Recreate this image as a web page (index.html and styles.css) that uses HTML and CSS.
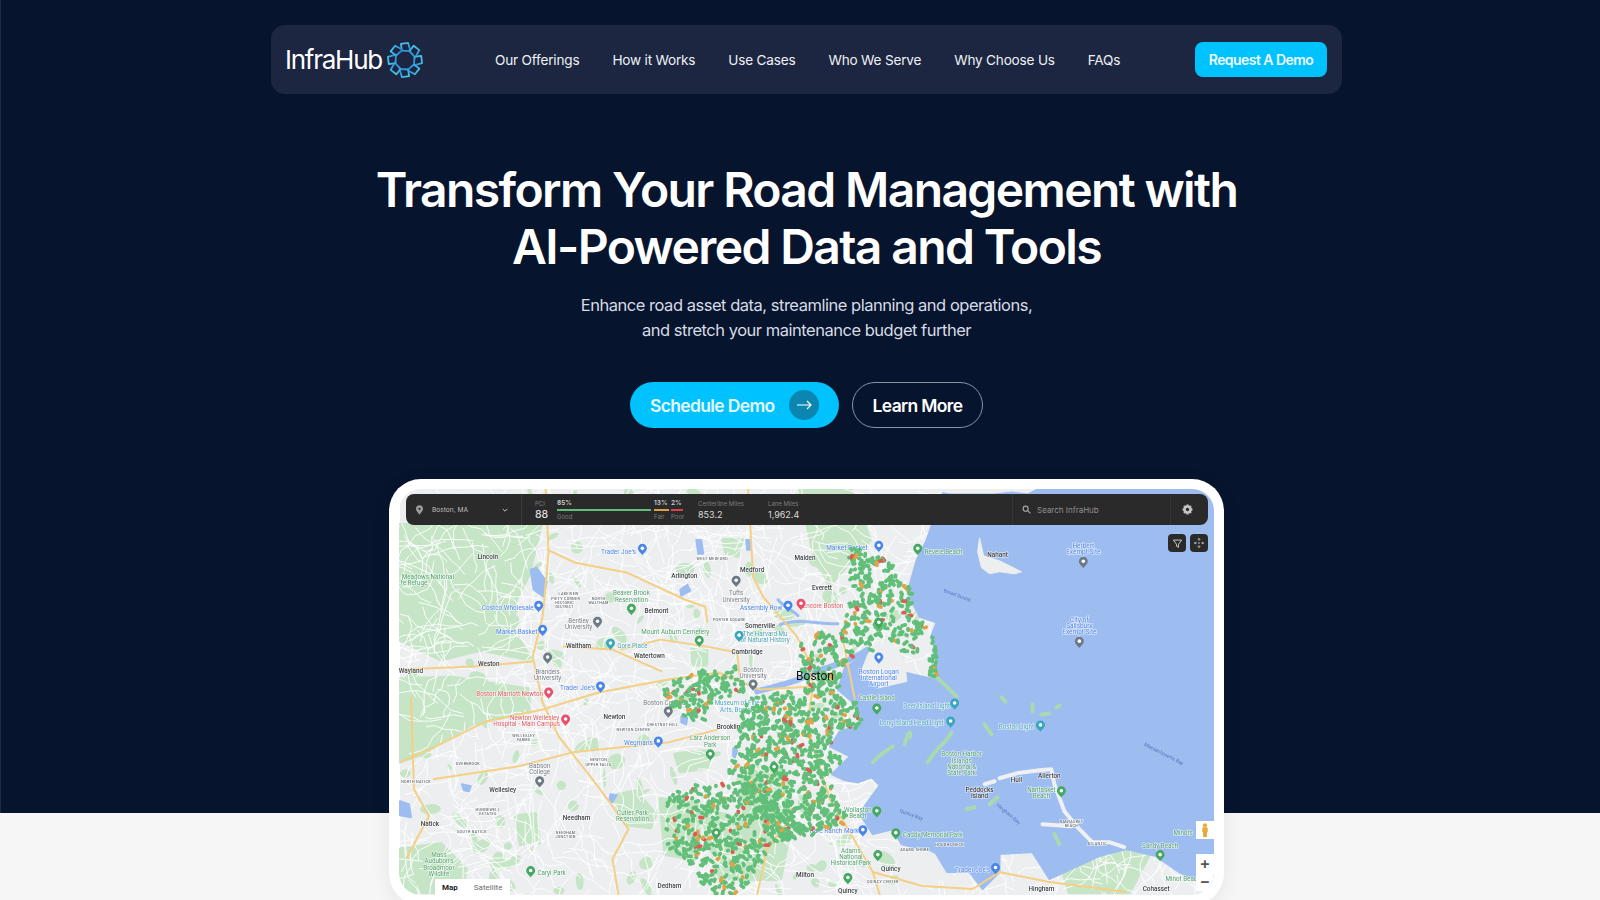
FILE: index.html
```html
<!DOCTYPE html>
<html lang="en">
<head>
    <meta charset="UTF-8">
    <meta name="viewport" content="width=device-width, initial-scale=1.0">
    <title>InfraHub - AI-Powered Road Management</title>
    <link rel="stylesheet" href="styles.css">
</head>
<body>
    <section class="hero">
        <header class="navbar">
            <a class="logo" href="#">
                <span class="logo-text">InfraHub</span>
                <svg class="logo-mark" viewBox="-20 -20 40 40" aria-hidden="true">
                    <defs>
                        <linearGradient id="logoGrad" x1="0" y1="0" x2="1" y2="1">
                            <stop offset="0" stop-color="#4cc9e6"/>
                            <stop offset="1" stop-color="#2586d6"/>
                        </linearGradient>
                        <path id="tooth" d="M-4.5 -18 L3.5 -19 L6 -10 L-3.5 -10.5 Z"/>
                    </defs>
                    <g fill="none" stroke="url(#logoGrad)" stroke-width="2" stroke-linejoin="round">
                        <use href="#tooth"/>
                        <use href="#tooth" transform="rotate(45)"/>
                        <use href="#tooth" transform="rotate(90)"/>
                        <use href="#tooth" transform="rotate(135)"/>
                        <use href="#tooth" transform="rotate(180)"/>
                        <use href="#tooth" transform="rotate(225)"/>
                        <use href="#tooth" transform="rotate(270)"/>
                        <use href="#tooth" transform="rotate(315)"/>
                    </g>
                </svg>
            </a>
            <nav class="nav-links">
                <a href="#">Our Offerings</a>
                <a href="#">How it Works</a>
                <a href="#">Use Cases</a>
                <a href="#">Who We Serve</a>
                <a href="#">Why Choose Us</a>
                <a href="#">FAQs</a>
            </nav>
            <a class="nav-cta" href="#">Request A Demo</a>
        </header>

        <h1 class="hero-title">Transform Your Road Management with<br>AI-Powered Data and Tools</h1>
        <p class="hero-sub">Enhance road asset data, streamline planning and operations,<br>and stretch your maintenance budget further</p>

        <div class="hero-actions">
            <a class="btn btn-primary" href="#">
                Schedule Demo
                <span class="btn-arrow">
                    <svg viewBox="0 0 20 20" width="20" height="20" aria-hidden="true"><path d="M3 10h14M13 6l4 4-4 4" fill="none" stroke="#fff" stroke-width="1.2"/></svg>
                </span>
            </a>
            <a class="btn btn-ghost" href="#">Learn More</a>
        </div>

        <div class="preview-card">
            <div class="map">
                <svg class="map-canvas" id="mapCanvas" viewBox="399 489 815 407" aria-label="Map of Boston road conditions">
                    <defs>
                        <g id="pin">
                            <path d="M0 5.5C-1.5 3-4.5 1.5-4.5-1.5a4.5 4.5 0 0 1 9 0C4.5 1.5 1.5 3 0 5.5Z"/>
                            <circle cx="0" cy="-1.5" r="1.8" fill="#fff"/>
                        </g>
                    </defs>

                    <rect x="399" y="489" width="815" height="407" fill="#eceef0"/>

                    <g class="green">
                        <polygon points="399,525 540,525 528,575 515,600 508,622 530,660 480,650 440,660 399,640"/>
                        <polygon points="399,680 450,678 528,690 528,712 470,725 420,755 399,762"/>
                        <polygon points="612,797 635,792 655,815 650,828 625,825"/>
                        <polygon points="515,817 535,815 538,840 520,845"/>
                        <polygon points="400,850 440,845 465,870 460,893 400,893"/>
                        <polygon points="723,540 742,540 738,556 726,553"/>
                        <polygon points="692,650 706,650 706,665 692,665"/>
                        <polygon points="675,755 705,752 708,768 680,772"/>
                        <polygon points="745,768 782,770 790,810 760,830 740,805"/>
                        <polygon points="700,810 790,830 780,880 720,880"/>
                        <polygon points="660,800 700,805 695,860 665,855"/>
                        <polygon points="800,489 850,489 870,540 830,585 815,560"/>
                        <polygon points="1060,860 1110,850 1150,855 1130,893 1070,893"/>
                    </g>
                    <g id="parks" class="parks"></g>

                    <g id="minorRoads" class="minor-roads"></g>

                    <g class="lakes">
                        <polygon points="530,570 536,568 546,582 543,597 533,590"/>
                        <polygon points="680,590 687,585 690,591 681,596"/>
                        <polygon points="696,540 701,540 703,554 698,554"/>
                        <polygon points="746,540 749,540 751,550 747,550"/>
                        <polygon points="681,717 687,718 686,725 681,723"/>
                        <polygon points="733,749 737,751 735,758 733,757"/>
                        <polygon points="461,785 470,787 468,792 463,791"/>
                        <polygon points="399,802 408,805 410,818 399,816"/>
                        <polygon points="610,795 616,796 612,803 609,800"/>
                    </g>
                    <path class="river" d="M757 692C775 686 795 684 812 674 825 667 840 668 868 650"/>
                    <path class="river thin" d="M780 625C800 618 820 625 838 624"/>
                    <path class="river thin" d="M778 600C784 608 792 610 798 616"/>

                    <polygon class="water" points="945,489 927,540 917,560 910,585 911,600 920,617 937,623 930,640 937,663 935,680 900,672 870,652 845,668 838,690 852,702 860,713 862,725 840,732 830,747 850,757 832,775 845,781 858,783 872,778 880,786 866,805 860,815 873,835 893,830 903,847 933,852 947,873 970,873 983,890 1000,873 1000,855 1033,853 1050,880 1100,857 1127,850 1157,857 1180,873 1214,890 1214,489"/>

                    <g class="land">
                        <polygon points="874,645 890,642 905,660 907,682 880,688 860,675 868,655"/>
                        <polygon points="900,630 925,625 934,650 915,660 900,650"/>
                        <polygon points="980,538 984,556 1000,561 1022,572 1015,574 1000,572 990,574 982,568 978,552"/>
                        <polygon points="930,489 1036,489 1028,493 1012,491 995,493 950,493"/>
                        <polygon points="895,845 935,855 950,880 900,885"/>
                    </g>
                    <g class="spit">
                        <path d="M1000 779L1017 774 1040 771 1052 770 1055 785 1065 812 1080 830 1093 843 1110 843 1125 848"/>
                        <path d="M1043 825L1072 827"/>
                        <path d="M985 785L995 782"/>
                    </g>

                    <g class="island">
                        <path d="M928 763C935 750 945 745 952 733"/>
                        <path d="M873 763C880 755 885 752 893 747"/>
                        <path d="M910 738C912 730 908 732 905 745"/>
                        <path d="M930 672C940 680 950 690 957 697"/>
                        <path d="M985 725L992 735"/>
                        <path d="M1002 698L1006 702"/>
                        <path d="M967 810L975 808M990 805L998 798"/>
                        <path d="M1055 835L1060 845"/>
                        <path d="M1033 705V712M1042 715L1050 714M1057 708L1060 706"/>
                    </g>

                    <g class="highways">
                        <path d="M545 489L548 553 542 617 532 657 542 703 558 737 592 780 612 807 628 830 612 860 618 896"/>
                        <path d="M547 550L575 563 627 573 685 600 705 607 707 623"/>
                        <path d="M399 763L435 747 485 722 542 710 598 693 668 680 718 673 760 690 813 687"/>
                        <path d="M432 780L518 767 572 753 668 743 718 730"/>
                        <path d="M399 670L472 667 532 662M562 647L612 650 662 672"/>
                        <path d="M410 697L413 790 428 817 405 860"/>
                        <path d="M748 489L753 577 763 597 797 637 810 663 813 687 807 727 830 800 850 833 873 873 880 896"/>
                        <path d="M873 873L923 887 973 890 1000 873 1050 883 1127 893"/>
                        <path d="M757 896L767 850 790 820"/>
                        <path d="M707 647L737 653 740 680"/>
                        <path d="M620 650L660 640 707 647"/>
                        <path d="M843 640L855 700"/>
                    </g>

                    <g class="lbl">
                        <text x="487" y="559">Lincoln</text>
                        <text x="578" y="648">Waltham</text>
                        <text x="656" y="613">Belmont</text>
                        <text x="649" y="658">Watertown</text>
                        <text x="488" y="666">Weston</text>
                        <text x="410" y="673">Wayland</text>
                        <text x="614" y="720">Newton</text>
                        <text x="730" y="730">Brookline</text>
                        <text x="502" y="793">Wellesley</text>
                        <text x="576" y="821">Needham</text>
                        <text x="429" y="827">Natick</text>
                        <text x="669" y="889">Dedham</text>
                        <text x="805" y="560">Malden</text>
                        <text x="752" y="572">Medford</text>
                        <text x="684" y="578">Arlington</text>
                        <text x="822" y="590">Everett</text>
                        <text x="760" y="628">Somerville</text>
                        <text x="747" y="654">Cambridge</text>
                        <text x="998" y="557">Nahant</text>
                        <text x="805" y="878">Milton</text>
                        <text x="891" y="872">Quincy</text>
                        <text x="848" y="894">Quincy</text>
                        <text x="1017" y="783">Hull</text>
                        <text x="1050" y="779">Allerton</text>
                        <text x="1042" y="892">Hingham</text>
                        <text x="1157" y="892">Cohasset</text>
                        <text x="980" y="793">Peddocks</text>
                        <text x="980" y="799">Island</text>
                    </g>
                    <g class="lbl-grey">
                        <text x="547" y="674">Brandeis</text>
                        <text x="547" y="680">University</text>
                        <text x="578" y="623">Bentley</text>
                        <text x="578" y="629">University</text>
                        <text x="539" y="769">Babson</text>
                        <text x="539" y="775">College</text>
                        <text x="664" y="706">Boston College</text>
                        <text x="736" y="595">Tufts</text>
                        <text x="736" y="602">University</text>
                        <text x="753" y="672">Boston</text>
                        <text x="753" y="678">University</text>
                    </g>
                    <g class="lbl-caps">
                        <text x="568" y="595">LAKEVIEW</text>
                        <text x="565" y="600">PIETY CORNER</text>
                        <text x="564" y="604">HISTORIC</text>
                        <text x="564" y="608">DISTRICT</text>
                        <text x="598" y="600">NORTH</text>
                        <text x="598" y="604">WALTHAM</text>
                        <text x="712" y="560">WEST MEDFORD</text>
                        <text x="729" y="621">PORTER SQUARE</text>
                        <text x="662" y="727">CHESTNUT HILL</text>
                        <text x="633" y="732">NEWTON CENTRE</text>
                        <text x="523" y="738">WELLESLEY</text>
                        <text x="523" y="742">FARMS</text>
                        <text x="598" y="762">NEWTON</text>
                        <text x="598" y="767">UPPER FALLS</text>
                        <text x="467" y="766">OVERBROOK</text>
                        <text x="415" y="784">NORTH NATICK</text>
                        <text x="487" y="812">HUNNEWELL</text>
                        <text x="487" y="816">ESTATES</text>
                        <text x="471" y="834">SOUTH NATICK</text>
                        <text x="565" y="835">NEEDHAM</text>
                        <text x="565" y="839">JUNCTION</text>
                        <text x="950" y="847">HOUGHS NECK</text>
                        <text x="915" y="852">ADAMS SHORE</text>
                        <text x="883" y="884">QUINCY CENTER</text>
                        <text x="1072" y="824">NANTASKET</text>
                        <text x="1072" y="828">BEACH</text>
                        <text x="1098" y="846">ATLANTIC</text>
                    </g>
                    <g class="lbl-green">
                        <text x="427" y="579">Meadows National</text>
                        <text x="413" y="585">fe Refuge</text>
                        <text x="631" y="595">Beaver Brook</text>
                        <text x="631" y="602">Reservation</text>
                        <text x="675" y="634">Mount Auburn Cemetery</text>
                        <text x="710" y="741">Larz Anderson</text>
                        <text x="710" y="748">Park</text>
                        <text x="632" y="816">Cutler Park</text>
                        <text x="632" y="822">Reservation</text>
                        <text x="438" y="858">Mass</text>
                        <text x="438" y="864">Audubon's</text>
                        <text x="438" y="871">Broadmoor</text>
                        <text x="438" y="877">Wildlife</text>
                        <text x="551" y="876">Caryl Park</text>
                        <text x="944" y="554">Revere Beach</text>
                        <text x="877" y="701">Castle Island</text>
                        <text x="858" y="813">Wollaston</text>
                        <text x="858" y="819">Beach</text>
                        <text x="933" y="838">Caddy Memorial Park</text>
                        <text x="851" y="854">Adams</text>
                        <text x="851" y="860">National</text>
                        <text x="851" y="866">Historical Park</text>
                        <text x="962" y="757">Boston Harbor</text>
                        <text x="962" y="764">Islands</text>
                        <text x="962" y="770">National &amp;</text>
                        <text x="962" y="776">State Park</text>
                        <text x="1042" y="793">Nantasket</text>
                        <text x="1042" y="799">Beach</text>
                        <text x="1161" y="849">Sandy Beach</text>
                        <text x="1184" y="882">Minot Beach</text>
                        <text x="1184" y="836">Minots</text>
                    </g>
                    <g class="lbl-blue">
                        <text x="618" y="554">Trader Joe's</text>
                        <text x="507" y="610">Costco Wholesale</text>
                        <text x="516" y="634">Market Basket</text>
                        <text x="577" y="691">Trader Joe's</text>
                        <text x="638" y="746">Wegmans</text>
                        <text x="761" y="610">Assembly Row</text>
                        <text x="847" y="550">Market Basket</text>
                        <text x="837" y="834">Rare Ranch Market</text>
                        <text x="973" y="873">Trader Joe's</text>
                        <text x="879" y="674">Boston Logan</text>
                        <text x="879" y="680">International</text>
                        <text x="879" y="686">Airport</text>
                        <text x="1084" y="548">Herbert</text>
                        <text x="1084" y="554">Exempt Site</text>
                        <text x="1080" y="622">City of</text>
                        <text x="1080" y="628">Salisbury</text>
                        <text x="1080" y="634">Exempt Site</text>
                    </g>
                    <g class="lbl-teal">
                        <text x="632" y="648">Gore Place</text>
                        <text x="765" y="636">The Harvard Mu</text>
                        <text x="765" y="642">of Natural History</text>
                        <text x="737" y="706">Museum of Fine</text>
                        <text x="737" y="713">Arts, Boston</text>
                        <text x="927" y="709">Deer Island Light</text>
                        <text x="912" y="726">Long Island Head Light</text>
                        <text x="1017" y="730">Boston Light</text>
                    </g>
                    <g class="lbl-red">
                        <text x="509" y="697">Boston Marriott Newton</text>
                        <text x="534" y="721">Newton Wellesley</text>
                        <text x="526" y="727">Hospital - Main Campus</text>
                        <text x="823" y="608">Encore Boston</text>
                    </g>
                    <g class="lbl-bay">
                        <text transform="translate(1164 756) rotate(27)">Massachusetts Bay</text>
                        <text transform="translate(957 597) rotate(20)">Broad Sound</text>
                        <text transform="translate(911 817) rotate(20)">Quincy Bay</text>
                        <text transform="translate(1008 816) rotate(40)">Hingham Bay</text>
                    </g>

                    <g id="roadData" class="road-data"></g>

                    <text class="city-label" x="815" y="680">Boston</text>

                    <g class="pins-blue">
                        <use href="#pin" x="642" y="550"/>
                        <use href="#pin" x="538" y="607"/>
                        <use href="#pin" x="542" y="631"/>
                        <use href="#pin" x="600" y="688"/>
                        <use href="#pin" x="658" y="743"/>
                        <use href="#pin" x="788" y="607"/>
                        <use href="#pin" x="879" y="547"/>
                        <use href="#pin" x="879" y="659"/>
                        <use href="#pin" x="863" y="832"/>
                        <use href="#pin" x="996" y="870"/>
                    </g>
                    <g class="pins-green">
                        <use href="#pin" x="631" y="610"/>
                        <use href="#pin" x="699" y="642"/>
                        <use href="#pin" x="710" y="756"/>
                        <use href="#pin" x="530" y="873"/>
                        <use href="#pin" x="918" y="550"/>
                        <use href="#pin" x="877" y="710"/>
                        <use href="#pin" x="877" y="813"/>
                        <use href="#pin" x="896" y="835"/>
                        <use href="#pin" x="878" y="857"/>
                        <use href="#pin" x="848" y="880"/>
                        <use href="#pin" x="1062" y="793"/>
                        <use href="#pin" x="1161" y="857"/>
                        <use href="#pin" x="774" y="769"/>
                        <use href="#pin" x="716" y="835"/>
                        <use href="#pin" x="879" y="624"/>
                    </g>
                    <g class="pins-grey">
                        <use href="#pin" x="597" y="623"/>
                        <use href="#pin" x="547" y="659"/>
                        <use href="#pin" x="668" y="713"/>
                        <use href="#pin" x="539" y="783"/>
                        <use href="#pin" x="736" y="582"/>
                        <use href="#pin" x="753" y="686"/>
                        <use href="#pin" x="1084" y="563"/>
                        <use href="#pin" x="1080" y="643"/>
                    </g>
                    <g class="pins-teal">
                        <use href="#pin" x="610" y="645"/>
                        <use href="#pin" x="739" y="637"/>
                        <use href="#pin" x="955" y="705"/>
                        <use href="#pin" x="951" y="723"/>
                        <use href="#pin" x="1041" y="727"/>
                    </g>
                    <g class="pins-red">
                        <use href="#pin" x="548" y="694"/>
                        <use href="#pin" x="565" y="721"/>
                        <use href="#pin" x="801" y="605"/>
                    </g>
                </svg>

                <div class="map-bar">
                    <div class="bar-place">
                        <svg viewBox="0 0 12 16" width="7" height="10" aria-hidden="true"><path d="M6 0a6 6 0 0 0-6 6c0 4 6 10 6 10s6-6 6-10a6 6 0 0 0-6-6Zm0 8a2 2 0 1 1 0-4 2 2 0 0 1 0 4Z" fill="#9a9a9a"/></svg>
                        <span class="place-name">Boston, MA</span>
                        <svg viewBox="0 0 10 6" width="6" height="4" aria-hidden="true"><path d="M1 1l4 4 4-4" fill="none" stroke="#c8c8c8" stroke-width="1.6"/></svg>
                    </div>
                    <div class="bar-stats">
                        <div class="stat stat-pci">
                            <span class="stat-label">PCI</span>
                            <span class="stat-value">88</span>
                        </div>
                        <div class="grade grade-good">
                            <span class="grade-pct">85%</span>
                            <i></i>
                            <span class="stat-label">Good</span>
                        </div>
                        <div class="grade grade-fair">
                            <span class="grade-pct">13%</span>
                            <i></i>
                            <span class="stat-label">Fair</span>
                        </div>
                        <div class="grade grade-poor">
                            <span class="grade-pct">2%</span>
                            <i></i>
                            <span class="stat-label">Poor</span>
                        </div>
                        <div class="stat stat-miles">
                            <span class="stat-label">Centerline Miles</span>
                            <span class="stat-value">853.2</span>
                        </div>
                        <div class="stat stat-miles">
                            <span class="stat-label">Lane Miles</span>
                            <span class="stat-value">1,962.4</span>
                        </div>
                    </div>
                    <div class="bar-search">
                        <svg viewBox="0 0 16 16" width="9" height="9" aria-hidden="true"><circle cx="6.5" cy="6.5" r="4.5" fill="none" stroke="#a8a8a8" stroke-width="2"/><path d="M10 10l5 5" stroke="#a8a8a8" stroke-width="2"/></svg>
                        <span>Search InfraHub</span>
                    </div>
                    <div class="bar-settings">
                        <svg viewBox="0 0 20 20" width="11" height="11" aria-hidden="true"><path d="M8 1h4l.6 2.600 2.200-1.300 2.900 2.900-1.300 2.200 2.600.6v4l-2.600.6 1.300 2.200-2.900 2.900-2.200-1.300-.6 2.600H8l-.6-2.600-2.200 1.300-2.900-2.900 1.300-2.200L1 12V8l2.600-.6-1.300-2.200 2.900-2.900 2.200 1.300Z" fill="#c4c4c4"/><circle cx="10" cy="10" r="3" fill="#2b2b2b"/></svg>
                    </div>
                </div>

                <div class="map-tools">
                    <span class="tool-btn">
                        <svg viewBox="0 0 16 16" width="11" height="11" aria-hidden="true"><path d="M2 3h12L9.500 9v4.500l-3-1.500V9Z" fill="none" stroke="#e6e6e6" stroke-width="1.2"/></svg>
                    </span>
                    <span class="tool-btn">
                        <svg viewBox="0 0 16 16" width="12" height="12" aria-hidden="true"><path d="M8 2v3M8 11v3M2 8h3M11 8h3M6.500 3.500 8 2l1.500 1.500M6.500 12.500 8 14l1.500-1.500M3.500 6.500 2 8l1.500 1.500M12.500 6.500 14 8l-1.500 1.500" fill="none" stroke="#e6e6e6" stroke-width="1"/><circle cx="8" cy="8" r="1" fill="#e6e6e6"/></svg>
                    </span>
                </div>

                <div class="map-type">
                    <span class="type-on">Map</span>
                    <span>Satellite</span>
                </div>

                <div class="map-pegman">
                    <svg viewBox="0 0 10 18" width="8" height="14" aria-hidden="true"><circle cx="5" cy="3" r="2.600" fill="#e9a93a"/><path d="M1.500 7q0-1.500 1.500-1.500h4q1.500 0 1.500 1.500v4.500H7.500V18h-5v-6.500h-1Z" fill="#e9a93a"/></svg>
                </div>

                <div class="map-zoom">
                    <span>+</span>
                    <span>&minus;</span>
                </div>
            </div>
        </div>
    </section>
    <section class="below"></section>
    <script src="map.js"></script>
</body>
</html>
```

FILE: styles.css
```css
:root {
    --navy: #07142e;
    --nav-bg: #1d2640;
    --cyan: #00c2ff;
    --bar-bg: #2a2a2a;
}
html, body {
    height: 100%;
    overflow: hidden;
}
body {
    margin: 0;
    font-family: 'Inter', 'Noto Sans', sans-serif;
    background-color: #f6f6f6;
    color: #fff;
}
a {
    color: inherit;
    text-decoration: none;
}
.hero {
    height: 813px;
    background-color: var(--navy);
    border-left: 1px solid #1b2944;
    padding: 25px 0 0 12px;
    box-sizing: border-box;
    display: flex;
    flex-direction: column;
    align-items: center;
}
.navbar {
    width: 1071px;
    height: 69px;
    box-sizing: border-box;
    padding: 0 15px 0 14px;
    flex-shrink: 0;
    display: flex;
    align-items: center;
    background-color: var(--nav-bg);
    border-radius: 14px;
}
.logo {
    display: flex;
    align-items: center;
    gap: 5px;
    width: 210px;
}
.logo-text {
    font-size: 26px;
    font-weight: 400;
    letter-spacing: -1.25px;
}
.logo-mark {
    width: 36px;
    height: 36px;
}
.nav-links {
    display: flex;
    gap: 33px;
    font-size: 13.6px;
    letter-spacing: -0.2px;
    color: #eef1f6;
}
.nav-cta {
    margin-left: auto;
    width: 132px;
    height: 35px;
    display: flex;
    align-items: center;
    justify-content: center;
    background-color: var(--cyan);
    border-radius: 8px;
    font-size: 14px;
    font-weight: 600;
    letter-spacing: -0.55px;
    color: #eefaff;
}
.hero-title {
    margin: 67px 0 0;
    font-size: 48px;
    line-height: 57px;
    font-weight: 600;
    letter-spacing: -1.62px;
    text-align: center;
}
.hero-sub {
    margin: 18px 0 0;
    font-size: 16.5px;
    line-height: 25px;
    letter-spacing: -0.48px;
    text-align: center;
    color: #d6dbe4;
}
.hero-actions {
    display: flex;
    gap: 13px;
    margin-top: 39px;
}
.btn {
    height: 46px;
    box-sizing: border-box;
    display: flex;
    align-items: center;
    border-radius: 23px;
    font-size: 17.5px;
    font-weight: 600;
    letter-spacing: -0.65px;
}
.btn-primary {
    width: 209px;
    padding-left: 20px;
    gap: 14px;
    background-color: var(--cyan);
    color: #e6f8ff;
}
.btn-arrow {
    width: 30px;
    height: 30px;
    display: flex;
    align-items: center;
    justify-content: center;
    border-radius: 50%;
    background-color: #0a86b0;
}
.btn-ghost {
    width: 131px;
    justify-content: center;
    border: 1px solid #8a93a5;
}
.preview-card {
    width: 835px;
    height: 426px;
    margin-top: 51px;
    flex-shrink: 0;
    box-sizing: border-box;
    padding: 10px;
    background-color: #fff;
    border-radius: 32px;
    box-shadow: 0 4px 20px rgba(0,0,0,0.07);
    position: relative;
    z-index: 1;
}
.map {
    width: 100%;
    height: 100%;
    position: relative;
    overflow: hidden;
    border-radius: 22px;
}
.map-canvas {
    display: block;
    width: 100%;
    height: 100%;
    filter: blur(0.35px);
}
.below {
    height: 120px;
    background-color: #f6f6f6;
}

/* map drawing */
.green polygon {
    fill: #c6e5c7;
    stroke: #c6e5c7;
    stroke-width: 4;
    stroke-linejoin: round;
}
.parks ellipse {
    fill: #c6e5c7;
}
.minor-roads path {
    fill: none;
    stroke: #fff;
    stroke-width: 0.9;
}
.lakes polygon,
.water {
    fill: #9dbdf1;
    stroke: #9dbdf1;
    stroke-width: 2;
    stroke-linejoin: round;
}
.river {
    fill: none;
    stroke: #9dbdf1;
    stroke-width: 6;
    stroke-linecap: round;
}
.river.thin {
    stroke-width: 3;
}
.land polygon {
    fill: #eceef0;
    stroke: #eceef0;
    stroke-width: 1;
    stroke-linejoin: round;
}
.spit path {
    fill: none;
    stroke: #eef0f2;
    stroke-width: 4;
    stroke-linecap: round;
    stroke-linejoin: round;
}
.island path {
    fill: none;
    stroke: #a9d9b0;
    stroke-width: 4;
    stroke-linecap: round;
}
.highways path {
    fill: none;
    stroke: #f4cf84;
    stroke-width: 2;
    stroke-linejoin: round;
}
.road-data path {
    fill: none;
    stroke-width: 3.8;
    stroke-linecap: round;
    stroke-linejoin: round;
}
.road-data .good { stroke: #62bf7a; }
.road-data .fair { stroke: #e0a348; }
.road-data .poor { stroke: #d95f50; }

.lbl text,
.lbl-grey text,
.lbl-caps text,
.lbl-green text,
.lbl-blue text,
.lbl-teal text,
.lbl-red text,
.lbl-bay text {
    font-family: 'Roboto', 'Liberation Sans', sans-serif;
    text-anchor: middle;
    paint-order: stroke;
    stroke: rgba(255,255,255,0.75);
    stroke-width: 1.2px;
}
.lbl text { font-size: 6.4px; fill: #3f4347; font-weight: 500; }
.lbl-grey text { font-size: 6.3px; fill: #757c84; }
.lbl-caps text { font-size: 3.7px; fill: #666c72; letter-spacing: 0.3px; font-weight: 500; }
.lbl-green text { font-size: 6.3px; fill: #4f9e69; }
.lbl-blue text { font-size: 6.5px; fill: #4a80e8; }
.lbl-teal text { font-size: 6.3px; fill: #4aa3b6; }
.lbl-red text { font-size: 6.3px; fill: #dd5a5f; }
.lbl-bay text { font-size: 5px; fill: #4f76bd; stroke: none; }
.city-label {
    font-family: 'Roboto', 'Liberation Sans', sans-serif;
    font-size: 12px;
    text-anchor: middle;
    fill: #111;
}

.pins-blue { fill: #4a86e8; }
.pins-green { fill: #45a861; }
.pins-grey { fill: #6c7a86; }
.pins-teal { fill: #3aa6bd; }
.pins-red { fill: #e8506a; }

/* map overlays */
.map-bar {
    position: absolute;
    top: 5px;
    left: 7px;
    right: 6px;
    height: 31px;
    display: flex;
    align-items: center;
    background-color: var(--bar-bg);
    border-radius: 8px;
    font-size: 7px;
    color: #8b8b8b;
}
.bar-place {
    width: 116px;
    height: 100%;
    box-sizing: border-box;
    padding: 0 13px 0 10px;
    display: flex;
    align-items: center;
    border-right: 1px solid #3a3a3a;
}
.place-name {
    margin-left: 9px;
    margin-right: auto;
    font-size: 6.6px;
    color: #bdbdbd;
}
.bar-stats {
    display: flex;
    align-items: center;
    padding-left: 13px;
    flex: 1;
}
.stat {
    display: flex;
    flex-direction: column;
    gap: 2px;
}
.stat-label {
    font-size: 6px;
    line-height: 7px;
    color: #7c7c7c;
}
.stat-value {
    font-size: 9px;
    line-height: 11px;
    color: #dcdcdc;
}
.stat-pci {
    width: 22px;
}
.stat-pci .stat-value {
    font-size: 10.5px;
    font-weight: 500;
}
.stat-miles {
    margin-left: 12px;
    width: 58px;
}
.grade {
    display: flex;
    flex-direction: column;
    margin-right: 3px;
}
.grade i {
    display: block;
    height: 2px;
    margin: 2px 0;
}
.grade-pct {
    font-size: 6.5px;
    line-height: 8px;
    font-weight: 600;
    color: #cfcfcf;
}
.grade-good { width: 94px; }
.grade-good i { background-color: #62bd7c; }
.grade-fair { width: 15px; margin-right: 2px; }
.grade-fair i { background-color: #e0a048; }
.grade-poor { width: 12px; }
.grade-poor i { background-color: #d7454c; }
.bar-search {
    width: 159px;
    height: 100%;
    box-sizing: border-box;
    padding-left: 9px;
    display: flex;
    align-items: center;
    gap: 6px;
    border-left: 1px solid #343434;
    border-right: 1px solid #343434;
    font-size: 8px;
    color: #8f8f8f;
}
.bar-settings {
    width: 37px;
    box-sizing: border-box;
    padding-right: 5px;
    display: flex;
    justify-content: center;
}
.map-tools {
    position: absolute;
    top: 45px;
    right: 6px;
    display: flex;
    gap: 4px;
}
.tool-btn {
    width: 18px;
    height: 18px;
    display: flex;
    align-items: center;
    justify-content: center;
    background-color: var(--bar-bg);
    border-radius: 4px;
}
.map-type {
    position: absolute;
    left: 36px;
    bottom: 0;
    height: 16px;
    display: flex;
    align-items: center;
    gap: 16px;
    padding: 0 8px 0 7px;
    background-color: #fff;
    font-family: 'Roboto', sans-serif;
    font-size: 8px;
    color: #6b6b6b;
}
.type-on {
    font-weight: 700;
    color: #222;
}
.map-pegman {
    position: absolute;
    top: 332px;
    right: 0;
    width: 18px;
    height: 18px;
    display: flex;
    align-items: center;
    justify-content: center;
    background-color: #fff;
}
.map-zoom {
    position: absolute;
    top: 365px;
    right: 0;
    width: 18px;
    height: 37px;
    display: flex;
    flex-direction: column;
    background-color: #fff;
    font-size: 16px;
    line-height: 18px;
    font-weight: 600;
    text-align: center;
    color: #555;
}
```

FILE: map.js
```js
// scatter the parks, small streets and road condition strokes on the map
const NS = 'http://www.w3.org/2000/svg';

let seed = 42;
function rand() {
    seed = (seed * 16807) % 2147483647;
    return seed / 2147483647;
}

// rough outlines of the surveyed road network, they keep the strokes off the water
const areas = [
    { count: 230, poly: [[663,690],[690,672],[737,667],[745,690],[720,700],[700,722],[680,715],[663,700]] },
    { count: 1000, poly: [[745,700],[800,690],[860,700],[862,725],[838,732],[830,750],[848,758],[830,777],[836,803],[850,820],[815,835],[775,845],[745,800],[725,770],[735,745]] },
    { count: 520, poly: [[665,795],[720,780],[775,790],[790,835],[760,860],[745,895],[705,895],[690,860],[668,850]] },
    { count: 340, poly: [[850,548],[880,555],[912,590],[915,618],[885,625],[870,650],[840,640],[850,600]] },
    { count: 130, poly: [[800,640],[830,630],[845,660],[835,695],[805,695]] },
    { count: 60, poly: [[820,684],[868,628],[882,632],[834,692]] },
    { count: 70, poly: [[868,625],[925,620],[935,640],[925,660],[905,655],[880,640]] },
    { count: 20, poly: [[930,645],[936,645],[937,680],[930,680]] }
];

function inside(poly, x, y) {
    let hit = false;
    for (let i = 0, j = poly.length - 1; i < poly.length; j = i++) {
        const [xi, yi] = poly[i];
        const [xj, yj] = poly[j];
        if ((yi > y) !== (yj > y) && x < (xj - xi) * (y - yi) / (yj - yi) + xi) hit = !hit;
    }
    return hit;
}

function addPath(group, d, cls) {
    const el = document.createElementNS(NS, 'path');
    el.setAttribute('d', d);
    if (cls) el.setAttribute('class', cls);
    group.appendChild(el);
}

function drawParks() {
    const group = document.getElementById('parks');
    for (let i = 0; i < 170; i++) {
        const el = document.createElementNS(NS, 'ellipse');
        const x = 399 + rand() * 560;
        const y = 489 + rand() * 407;
        el.setAttribute('cx', x.toFixed(1));
        el.setAttribute('cy', y.toFixed(1));
        el.setAttribute('rx', (2 + rand() * 9).toFixed(1));
        el.setAttribute('ry', (1.5 + rand() * 6).toFixed(1));
        el.setAttribute('transform', `rotate(${Math.floor(rand() * 180)} ${x.toFixed(1)} ${y.toFixed(1)})`);
        group.appendChild(el);
    }
}

function drawMinorRoads() {
    const group = document.getElementById('minorRoads');
    for (let i = 0; i < 1300; i++) {
        let x = 399 + rand() * 815;
        let y = 489 + rand() * 407;
        let angle = rand() * Math.PI * 2;
        let d = `M${x.toFixed(1)} ${y.toFixed(1)}`;
        const steps = 3 + Math.floor(rand() * 5);
        for (let s = 0; s < steps; s++) {
            angle += (rand() - 0.5) * 1.2;
            x += Math.cos(angle) * (5 + rand() * 9);
            y += Math.sin(angle) * (5 + rand() * 9);
            d += `L${x.toFixed(1)} ${y.toFixed(1)}`;
        }
        addPath(group, d);
    }
}

// short blobs of street, they overlap into clumps and still leave white gaps
function drawRoadData() {
    const group = document.getElementById('roadData');
    areas.forEach(area => {
        const xs = area.poly.map(p => p[0]);
        const ys = area.poly.map(p => p[1]);
        const minX = Math.min(...xs), maxX = Math.max(...xs);
        const minY = Math.min(...ys), maxY = Math.max(...ys);
        for (let i = 0; i < area.count; i++) {
            const x = minX + rand() * (maxX - minX);
            const y = minY + rand() * (maxY - minY);
            if (!inside(area.poly, x, y)) continue;
            const angle = rand() * Math.PI * 2;
            const len = 0.5 + rand() * 3;
            const d = `M${x.toFixed(1)} ${y.toFixed(1)}l${(Math.cos(angle) * len).toFixed(1)} ${(Math.sin(angle) * len).toFixed(1)}`;
            const pick = rand();
            const cls = pick < 0.87 ? 'good' : pick < 0.945 ? 'fair' : 'poor';
            addPath(group, d, cls);
        }
    });
}

drawParks();
drawMinorRoads();
drawRoadData();
```
